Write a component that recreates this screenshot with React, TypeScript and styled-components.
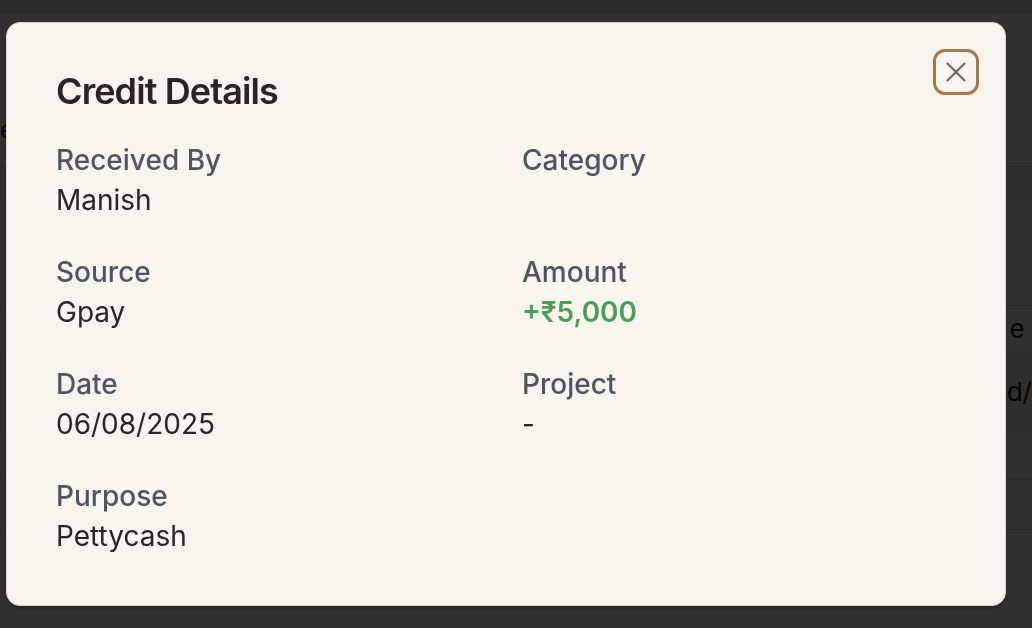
import React from "react";
import styled, { createGlobalStyle } from "styled-components";

const Global = createGlobalStyle`
  html, body { margin: 0; padding: 0; }
  body {
    width: 1032px;
    height: 628px;
    overflow: hidden;
    background: #f4f1ea;
    font-family: Inter, "Noto Sans", sans-serif;
  }
`;

const Page = styled.div`
  width: 1032px;
  height: 628px;
  display: flex;
  flex-direction: column;
  background: #f7f4ee;
`;

const TopBar = styled.div`
  height: 14px;
  background: #e2ddd3;
`;

const Body = styled.div`
  flex: 1;
  display: flex;
  flex-direction: column;
  padding-top: 100px;
`;

const Row = styled.div<{ $h: number; $shade?: boolean; $line?: boolean }>`
  box-sizing: border-box;
  height: ${(p) => p.$h}px;
  display: flex;
  align-items: center;
  justify-content: space-between;
  border-bottom: 1px solid ${(p) => (p.$line === false ? "transparent" : "#d8d2c6")};
  background: ${(p) => (p.$shade ? "#efebe3" : "transparent")};
  font-size: 26px;
  color: #111;
`;

const Peek = styled.span`
  font-family: Inter, sans-serif;
`;

const Overlay = styled.div`
  position: fixed;
  inset: 0;
  background: rgba(0, 0, 0, 0.8);
  display: flex;
  align-items: flex-start;
  padding: 22px 0 0 6px;
`;

const Modal = styled.div`
  position: relative;
  box-sizing: border-box;
  width: 1000px;
  height: 584px;
  background: #f8f5ee;
  border: 1px solid #ddd8cc;
  border-radius: 14px;
  box-shadow: 0 2px 4px rgba(0, 0, 0, 0.25);
  padding: 48px 49px 48px 49px;
  display: flex;
  flex-direction: column;
`;

const Title = styled.h2`
  margin: 0;
  font-size: 36px;
  line-height: 40px;
  font-weight: 600;
  color: #2b2420;
  letter-spacing: -0.9px;
`;

const Grid = styled.div`
  margin-top: 29px;
  display: grid;
  grid-template-columns: 1fr 1fr;
  column-gap: 32px;
  row-gap: 32px;
  width: 900px;
`;

const Field = styled.div`
  display: flex;
  flex-direction: column;
`;

const Label = styled.div`
  font-size: 28px;
  line-height: 40px;
  font-weight: 500;
  color: #4b5563;
`;

const Value = styled.div<{ $green?: boolean }>`
  font-size: 28px;
  line-height: 40px;
  min-height: 40px;
  font-weight: ${(p) => (p.$green ? 600 : 400)};
  color: ${(p) => (p.$green ? "#4a9d57" : "#2b2420")};
`;

const CloseButton = styled.button`
  position: absolute;
  top: 26px;
  right: 26px;
  width: 46px;
  height: 46px;
  box-sizing: border-box;
  border: 3px solid #a8764f;
  border-radius: 12px;
  background: transparent;
  display: flex;
  align-items: center;
  justify-content: center;
  padding: 0;
  color: #666;
`;

const fields: { label: string; value: string; green?: boolean }[] = [
  { label: "Received By", value: "Manish" },
  { label: "Category", value: "" },
  { label: "Source", value: "Gpay" },
  { label: "Amount", value: "+₹5,000", green: true },
  { label: "Date", value: "06/08/2025" },
  { label: "Project", value: "-" },
  { label: "Purpose", value: "Pettycash" },
];

export default function App() {
  return (
    <>
      <Global />
      <Page>
        <TopBar />
        <Body>
          <Row $h={32} $line={false}><Peek>e</Peek><span /></Row>
          <Row $h={21} />
          <Row $h={33} $shade />
          <Row $h={106} />
          <Row $h={46} $line={false}><span /><Peek>e&nbsp;</Peek></Row>
          <Row $h={80} $shade><span /><Peek>d/</Peek></Row>
          <Row $h={48} />
          <Row $h={50} />
        </Body>
      </Page>
      <Overlay>
        <Modal>
          <Title>Credit Details</Title>
          <Grid>
            {fields.map((f) => (
              <Field key={f.label}>
                <Label>{f.label}</Label>
                <Value $green={f.green}>{f.value}</Value>
              </Field>
            ))}
          </Grid>
          <CloseButton aria-label="Close">
            <svg width="24" height="24" viewBox="0 0 24 24" fill="none" stroke="currentColor" strokeWidth="2.2" strokeLinecap="round">
              <path d="M3.5 3.5 20.5 20.5" />
              <path d="M20.5 3.5 3.5 20.5" />
            </svg>
          </CloseButton>
        </Modal>
      </Overlay>
    </>
  );
}
